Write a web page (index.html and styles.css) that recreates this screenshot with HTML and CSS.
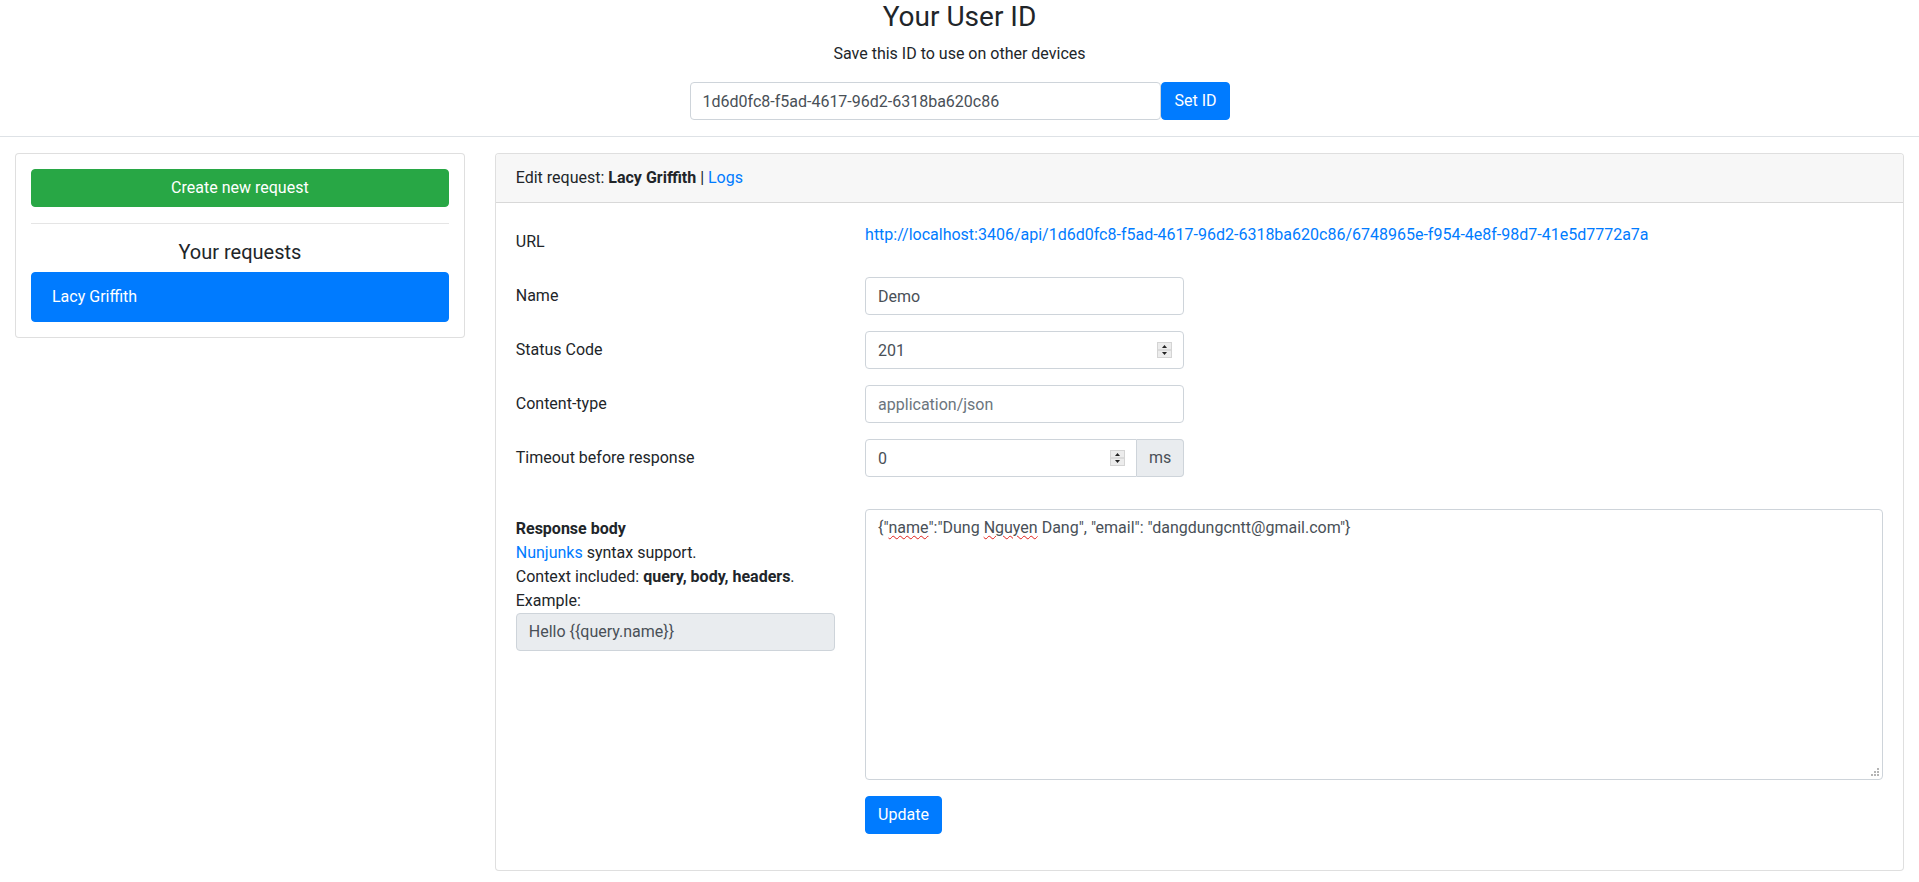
FILE: index.html
```html
<!DOCTYPE html>
<html lang="en">
<head>
<meta charset="utf-8">
<title>Your User ID</title>
<link rel="stylesheet" href="styles.css">
</head>
<body>
<header class="top">
  <h3 class="top-title">Your User ID</h3>
  <p class="top-sub">Save this ID to use on other devices</p>
  <div class="id-group">
    <input class="control id-input" type="text" value="1d6d0fc8-f5ad-4617-96d2-6318ba620c86">
    <button class="btn btn-primary btn-join">Set ID</button>
  </div>
</header>

<main class="layout">
  <aside class="col-side">
    <div class="card side-card">
      <button class="btn btn-success btn-block">Create new request</button>
      <hr class="divider">
      <h5 class="side-title">Your requests</h5>
      <div class="list">
        <a class="list-item active">Lacy Griffith</a>
      </div>
    </div>
  </aside>

  <section class="col-main">
    <div class="card">
      <div class="card-header">Edit request: <b>Lacy Griffith</b> | <a class="link">Logs</a></div>
      <div class="card-body">
        <div class="row">
          <label class="col-label">URL</label>
          <div class="col-wide"><a class="link">http://localhost:3406/api/1d6d0fc8-f5ad-4617-96d2-6318ba620c86/6748965e-f954-4e8f-98d7-41e5d7772a7a</a></div>
        </div>
        <div class="row">
          <label class="col-label">Name</label>
          <div class="col-narrow"><input class="control" type="text" value="Demo"></div>
        </div>
        <div class="row">
          <label class="col-label">Status Code</label>
          <div class="col-narrow">
            <div class="spin-wrap">
              <input class="control" type="text" value="201">
              <span class="spinner"><svg width="15" height="16" viewBox="0 0 15 16"><rect x="0.5" y="0.5" width="14" height="15" fill="#ececec" stroke="#d4d4d4"/><line x1="1" y1="8" x2="14" y2="8" stroke="#c8c8c8"/><path d="M5 6 L7.5 3 L10 6 Z" fill="#222"/><path d="M5 10 L10 10 L7.5 13 Z" fill="#222"/></svg></span>
            </div>
          </div>
        </div>
        <div class="row">
          <label class="col-label">Content-type</label>
          <div class="col-narrow"><input class="control" type="text" placeholder="application/json"></div>
        </div>
        <div class="row">
          <label class="col-label">Timeout before response</label>
          <div class="col-narrow">
            <div class="input-group">
              <div class="spin-wrap grow">
                <input class="control joined" type="text" value="0">
                <span class="spinner"><svg width="15" height="16" viewBox="0 0 15 16"><rect x="0.5" y="0.5" width="14" height="15" fill="#ececec" stroke="#d4d4d4"/><line x1="1" y1="8" x2="14" y2="8" stroke="#c8c8c8"/><path d="M5 6 L7.5 3 L10 6 Z" fill="#222"/><path d="M5 10 L10 10 L7.5 13 Z" fill="#222"/></svg></span>
              </div>
              <span class="addon">ms</span>
            </div>
          </div>
        </div>
        <div class="row row-body">
          <div class="col-label">
            <b>Response body</b><br>
            <a class="link">Nunjunks</a> syntax support.<br>
            Context included: <b>query, body, headers</b>.<br>
            Example:
            <div class="control readonly">Hello {{query.name}}</div>
          </div>
          <div class="col-wide">
            <div class="textarea">{"<span class="typo">name</span>":"Dung <span class="typo">Nguyen</span> Dang", "email": "dangdungcntt@gmail.com"}<svg class="grip" width="9" height="9" viewBox="0 0 9 9"><g fill="#b5b5b5"><rect x="6" y="0" width="2" height="2"/><rect x="3" y="3" width="2" height="2"/><rect x="6" y="3" width="2" height="2"/><rect x="0" y="6" width="2" height="2"/><rect x="3" y="6" width="2" height="2"/><rect x="6" y="6" width="2" height="2"/></g></svg></div>
          </div>
        </div>
        <div class="row">
          <div class="col-label"></div>
          <div class="col-wide"><button class="btn btn-primary">Update</button></div>
        </div>
      </div>
    </div>
  </section>
</main>
</body>
</html>
```

FILE: styles.css
```css
* { box-sizing: border-box; }

body {
  margin: 0;
  font-family: Roboto, "Liberation Sans", sans-serif;
  font-size: 16px;
  line-height: 1.5;
  color: #212529;
  background: #fff;
}

.top {
  text-align: center;
  padding-bottom: 16px;
  border-bottom: 1px solid #dee2e6;
  margin-bottom: 16px;
}
.top-title {
  margin: 0 0 8px;
  font-size: 28px;
  line-height: 34px;
  font-weight: 400;
}
.top-sub { margin: 0 0 16px; }

.id-group {
  width: 540px;
  margin: 0 auto;
  display: flex;
}
.id-input {
  flex: 1;
  border-top-right-radius: 0;
  border-bottom-right-radius: 0;
}
.btn-join {
  border-top-left-radius: 0;
  border-bottom-left-radius: 0;
}

.control {
  display: block;
  width: 100%;
  height: 38px;
  padding: 6px 12px;
  font: inherit;
  line-height: 1.5;
  color: #495057;
  background: #fff;
  border: 1px solid #ced4da;
  border-radius: 4px;
  outline: none;
}
.control::placeholder { color: #6c757d; }
.control.readonly { background: #e9ecef; }

.btn {
  display: inline-block;
  font: inherit;
  line-height: 1.5;
  padding: 6px 12px;
  border: 1px solid transparent;
  border-radius: 4px;
  color: #fff;
  cursor: pointer;
}
.btn-primary { background: #007bff; border-color: #007bff; }
.btn-success { background: #28a745; border-color: #28a745; }
.btn-block { display: block; width: 100%; }

.layout { display: flex; }
.col-side { flex: 0 0 25%; padding: 0 15px; }
.col-main { flex: 0 0 75%; padding: 0 15px; }

.card {
  border: 1px solid rgba(0, 0, 0, 0.125);
  border-radius: 4px;
  background: #fff;
}
.side-card { padding: 15px; }

.divider {
  margin: 16px 0;
  border: 0;
  border-top: 1px solid rgba(0, 0, 0, 0.1);
}
.side-title {
  margin: 0 0 8px;
  font-size: 20px;
  line-height: 1.2;
  font-weight: 400;
  text-align: center;
}
.list-item {
  display: block;
  padding: 12px 20px;
  border: 1px solid rgba(0, 0, 0, 0.125);
  border-radius: 4px;
}
.list-item.active {
  background: #007bff;
  border-color: #007bff;
  color: #fff;
}

.card-header {
  padding: 12px 20px;
  background: #f7f7f7;
  border-bottom: 1px solid rgba(0, 0, 0, 0.125);
  border-radius: 3px 3px 0 0;
}
.card-body { padding: 20px; }

.link { color: #007bff; text-decoration: none; }

.row {
  display: flex;
  margin: 0 -15px 16px;
}
.col-label {
  flex: 0 0 25%;
  padding: 7px 15px;
}
.col-narrow { flex: 0 0 25%; padding: 0 15px; }
.col-wide { flex: 0 0 75%; padding: 0 15px; }

.row-body { margin-top: 32px; }
.row-body .col-label { padding-top: 8px; }

.spin-wrap { position: relative; }
.spinner {
  position: absolute;
  right: 12px;
  top: 11px;
  width: 15px;
  height: 16px;
  line-height: 0;
}

.input-group { display: flex; }
.grow { flex: 1; }
.control.joined {
  border-top-right-radius: 0;
  border-bottom-right-radius: 0;
}
.addon {
  padding: 6px 12px;
  height: 38px;
  background: #e9ecef;
  border: 1px solid #ced4da;
  border-left: 0;
  border-radius: 0 4px 4px 0;
  color: #495057;
}

.textarea {
  position: relative;
  height: 271px;
  padding: 6px 12px;
  border: 1px solid #ced4da;
  border-radius: 4px;
  color: #495057;
}
.typo {
  text-decoration: underline wavy #e0201b;
  text-decoration-thickness: 1px;
  text-underline-offset: 2px;
}
.grip {
  position: absolute;
  right: 2px;
  bottom: 2px;
}
```
